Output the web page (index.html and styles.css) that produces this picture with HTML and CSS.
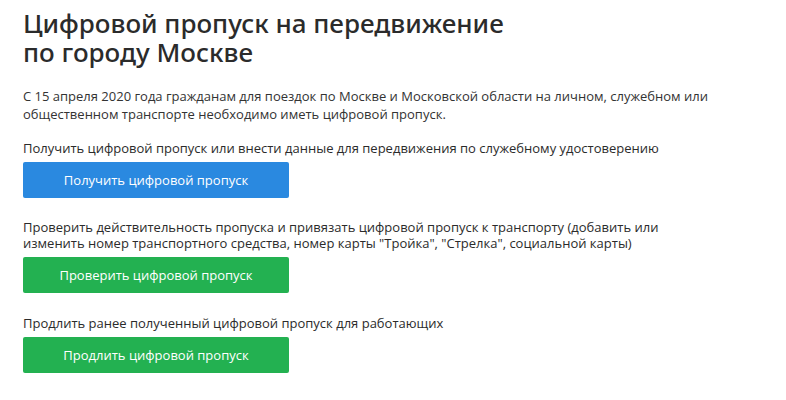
FILE: index.html
```html
<!DOCTYPE html>
<html lang="ru">
<head>
<meta charset="utf-8">
<link rel="stylesheet" href="styles.css">
</head>
<body>
<main class="page">
  <h1 class="title">Цифровой пропуск на передвижение<br>по городу Москве</h1>
  <p class="intro">С 15 апреля 2020 года гражданам для поездок по Москве и Московской области на личном, служебном или общественном транспорте необходимо иметь цифровой пропуск.</p>
  <section class="block">
    <p class="label">Получить цифровой пропуск или внести данные для передвижения по служебному удостоверению</p>
    <a class="btn btn-blue">Получить цифровой пропуск</a>
  </section>
  <section class="block">
    <p class="label">Проверить действительность пропуска и привязать цифровой пропуск к транспорту (добавить или изменить номер транспортного средства, номер карты "Тройка", "Стрелка", социальной карты)</p>
    <a class="btn btn-green">Проверить цифровой пропуск</a>
  </section>
  <section class="block">
    <p class="label">Продлить ранее полученный цифровой пропуск для работающих</p>
    <a class="btn btn-green">Продлить цифровой пропуск</a>
  </section>
</main>
</body>
</html>
```
FILE: styles.css
```css
* { box-sizing: border-box; }
html, body { margin: 0; background: #fff; }
body { font-family: "Open Sans", "Noto Sans", sans-serif; color: #333; }
.page { padding: 9px 23px 0; width: 740px; }
.title {
  margin: 0;
  font-family: "Noto Sans", sans-serif;
  font-weight: 500;
  font-size: 26px;
  line-height: 29px;
  color: #2b2b2b;
}
.intro {
  margin: 20px 0 0;
  font-size: 13px;
  line-height: 18px;
  color: #333;
}
.block { margin-top: 17px; display: flex; flex-direction: column; align-items: flex-start; }
.block + .block { margin-top: 21px; }
.block:last-child { margin-top: 22px; }
.label {
  margin: 0 0 6px;
  font-size: 13px;
  line-height: 16px;
  color: #2b2b2b;
}
.btn {
  display: flex;
  align-items: center;
  justify-content: center;
  width: 266px;
  height: 36px;
  border-radius: 2px;
  color: #fff;
  font-size: 13px;
  text-decoration: none;
}
.btn-blue { background: #2a89e0; }
.btn-green { background: #23b151; }
```
